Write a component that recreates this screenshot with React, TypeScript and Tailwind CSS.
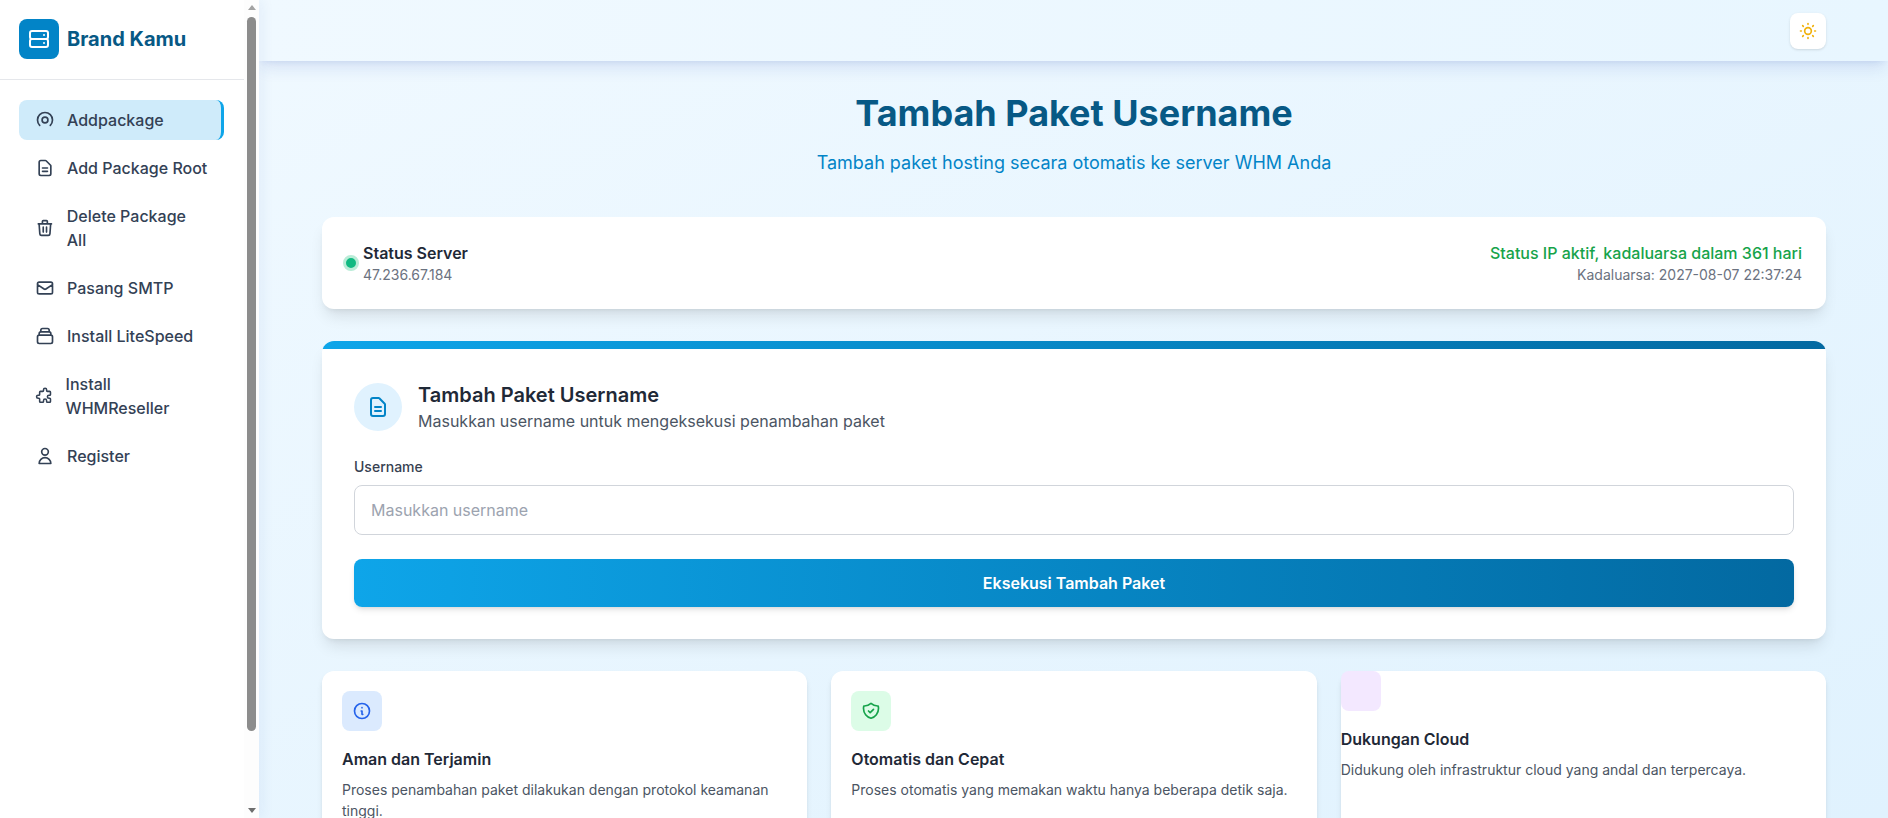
import React from "react";

const s = { fill: "none", stroke: "currentColor", strokeWidth: 2, strokeLinecap: "round" as const, strokeLinejoin: "round" as const };

function Ico({ d, className, children }: { d?: string; className?: string; children?: React.ReactNode }) {
  return (
    <svg viewBox="0 0 24 24" {...s} className={className ?? "w-5 h-5 mr-3"}>
      {d ? <path d={d} /> : null}
      {children}
    </svg>
  );
}

const docPath = "M9 12h6m-6 4h6m2 5H7a2 2 0 01-2-2V5a2 2 0 012-2h5.586a1 1 0 01.707.293l5.414 5.414a1 1 0 01.293.707V19a2 2 0 01-2 2z";

const nav: { label: string; d?: string; custom?: React.ReactNode; active?: boolean }[] = [
  {
    label: "Addpackage",
    active: true,
    custom: (
      <>
        <path d="M5.64 18.36A9 9 0 1 1 18.36 18.36" />
        <circle cx="12" cy="12" r="3.5" />
      </>
    ),
  },
  { label: "Add Package Root", d: docPath },
  {
    label: "Delete Package All",
    d: "M19 7l-.867 12.142A2 2 0 0116.138 21H7.862a2 2 0 01-1.995-1.858L5 7m5 4v6m4-6v6m1-10V4a1 1 0 00-1-1h-4a1 1 0 00-1 1v3M4 7h16",
  },
  {
    label: "Pasang SMTP",
    d: "M3 8l7.89 5.26a2 2 0 002.22 0L21 8M5 19h14a2 2 0 002-2V7a2 2 0 00-2-2H5a2 2 0 00-2 2v10a2 2 0 002 2z",
  },
  {
    label: "Install LiteSpeed",
    d: "M19 11H5m14 0a2 2 0 012 2v6a2 2 0 01-2 2H5a2 2 0 01-2-2v-6a2 2 0 012-2m14 0V9a2 2 0 00-2-2M5 11V9a2 2 0 012-2m0 0V5a2 2 0 012-2h6a2 2 0 012 2v2M7 7h10",
  },
  {
    label: "Install WHMReseller",
    d: "M11 4a2 2 0 114 0v1a1 1 0 001 1h3a1 1 0 011 1v3a1 1 0 01-1 1h-1a2 2 0 100 4h1a1 1 0 011 1v3a1 1 0 01-1 1h-3a1 1 0 01-1-1v-1a2 2 0 10-4 0v1a1 1 0 01-1 1H7a1 1 0 01-1-1v-3a1 1 0 00-1-1H4a2 2 0 110-4h1a1 1 0 001-1V7a1 1 0 011-1h3a1 1 0 001-1V4z",
  },
  {
    label: "Register",
    d: "M16 7a4 4 0 11-8 0 4 4 0 018 0zM12 14a7 7 0 00-7 7h14a7 7 0 00-7-7z",
  },
];

const features = [
  {
    title: "Aman dan Terjamin",
    desc: "Proses penambahan paket dilakukan dengan protokol keamanan tinggi.",
    box: "bg-[#dbeafe] text-[#2563eb]",
    d: "M13 16h-1v-4h-1m1-4h.01M21 12a9 9 0 11-18 0 9 9 0 0118 0z",
  },
  {
    title: "Otomatis dan Cepat",
    desc: "Proses otomatis yang memakan waktu hanya beberapa detik saja.",
    box: "bg-[#dcfce7] text-[#16a34a]",
    d: "M9 12l2 2 4-4m5.618-4.016A11.955 11.955 0 0112 2.944a11.955 11.955 0 01-8.618 3.04A12.02 12.02 0 003 9c0 5.591 3.824 10.29 9 11.622 5.176-1.332 9-6.03 9-11.622 0-1.042-.133-2.052-.382-3.016z",
  },
];

export default function App() {
  return (
    <div className="flex h-[818px] w-[1888px] overflow-hidden bg-[#e6f4fe] font-['Inter',sans-serif]">
      <aside className="relative z-10 flex h-full w-[259px] shrink-0 bg-white shadow-[4px_0_12px_rgba(30,64,175,0.06)]">
        <div className="h-full w-[244px] shrink-0">
          <div className="flex h-[80px] items-center border-b border-[#e5e7eb] pb-[1px] pl-[19px]">
            <div className="mr-2 flex h-10 w-10 items-center justify-center rounded-lg bg-[#0284c7] text-white">
              <Ico className="h-6 w-6" d="M5 12h14M5 12a2 2 0 01-2-2V6a2 2 0 012-2h14a2 2 0 012 2v4a2 2 0 01-2 2M5 12a2 2 0 00-2 2v4a2 2 0 002 2h14a2 2 0 002-2v-4a2 2 0 00-2-2m-2-4h.01M17 16h.01" />
            </div>
            <span className="text-xl font-bold text-[#075985]">Brand Kamu</span>
          </div>
          <nav className="ml-[19px] mt-5 flex w-[205px] flex-col gap-2">
            {nav.map((n) => (
              <div
                key={n.label}
                className={
                  n.active
                    ? "flex items-center rounded-lg border-r-[3px] border-[#0ea5e9] bg-[#cfebfa] px-4 py-2 text-[#334155]"
                    : "flex items-center rounded-lg px-4 py-2 text-[#334155]"
                }
              >
                <Ico d={n.d}>{n.custom}</Ico>
                <span className="text-base font-medium leading-6">{n.label}</span>
              </div>
            ))}
          </nav>
        </div>
        <div className="flex h-full w-[15px] shrink-0 flex-col items-center bg-[#fdfdfd]">
          <div className="mt-[5px] h-0 w-0 border-x-[4px] border-b-[5px] border-x-transparent border-b-[#a3a3a3]" />
          <div className="mt-[7px] h-[714px] w-[9px] rounded-full bg-[#8c8c8c]" />
          <div className="flex-1" />
          <div className="mb-[5px] h-0 w-0 border-x-[4px] border-t-[5px] border-x-transparent border-t-[#6e6e6e]" />
        </div>
      </aside>
      <main className="relative flex h-full min-w-0 flex-1 flex-col overflow-hidden bg-gradient-to-br from-[#f0f9ff] to-[#e0f2fe]">
        <header className="flex h-[61px] shrink-0 items-center justify-end bg-gradient-to-r from-[#f0f9ff] to-[#e8f6ff] pr-[62px] shadow-[0_10px_15px_-3px_rgba(30,64,175,0.12),0_4px_6px_-4px_rgba(30,64,175,0.12)]">
          <div className="flex h-9 w-9 items-center justify-center rounded-lg bg-white text-[#f0b10c] shadow-sm">
            <Ico className="h-5 w-5" d="M12 3v1m0 16v1m9-9h-1M4 12H3m15.364 6.364l-.707-.707M6.343 6.343l-.707-.707m12.728 0l-.707.707M6.343 17.657l-.707.707M16 12a4 4 0 11-8 0 4 4 0 018 0z" />
          </div>
        </header>
        <div className="flex flex-col pl-[63px] pr-[62px]">
          <div className="mt-[32px] flex flex-col items-center">
            <h1 className="text-4xl leading-10 font-bold text-[#075985]">Tambah Paket Username</h1>
            <p className="mt-4 text-lg leading-7 text-[#0284c7]">Tambah paket hosting secara otomatis ke server WHM Anda</p>
          </div>
          <section className="mt-[40px] flex h-[92px] items-center justify-between rounded-xl bg-white px-6 shadow-[0_10px_15px_-3px_rgba(0,0,0,0.1),0_4px_6px_-4px_rgba(0,0,0,0.1)]">
            <div className="flex items-center">
              <div className="ml-[-3px] mr-[4px] h-4 w-4 rounded-full border-[3px] border-[#b9ecd7] bg-[#10b981]" />
              <div>
                <div className="text-base leading-6 font-semibold text-[#1f2937]">Status Server</div>
                <div className="text-sm leading-5 text-[#6b7280]">47.236.67.184</div>
              </div>
            </div>
            <div className="text-right">
              <div className="text-base leading-6 font-medium text-[#16a34a]">Status IP aktif, kadaluarsa dalam 361 hari</div>
              <div className="text-sm leading-5 text-[#6b7280]">Kadaluarsa: 2027-08-07 22:37:24</div>
            </div>
          </section>
          <section className="mt-8 overflow-hidden rounded-xl bg-white shadow-[0_10px_15px_-3px_rgba(0,0,0,0.1),0_4px_6px_-4px_rgba(0,0,0,0.1)]">
            <div className="h-2 bg-gradient-to-r from-[#0ea5e9] to-[#0369a1]" />
            <div className="p-8">
              <div className="flex items-center">
                <div className="mr-4 flex h-12 w-12 items-center justify-center rounded-full bg-[#e0f2fe] text-[#0284c7]">
                  <Ico className="h-6 w-6" d={docPath} />
                </div>
                <div>
                  <div className="text-xl leading-7 font-semibold text-[#1f2937]">Tambah Paket Username</div>
                  <div className="text-base leading-6 text-[#4b5563]">Masukkan username untuk mengeksekusi penambahan paket</div>
                </div>
              </div>
              <div className="mt-6 text-sm leading-5 font-medium text-[#374151]">Username</div>
              <div className="mt-2 flex h-[50px] items-center rounded-lg border border-[#d1d5db] bg-white px-4 text-base text-[#9ca3af]">Masukkan username</div>
              <div className="mt-6 flex h-12 items-center justify-center rounded-lg bg-gradient-to-r from-[#0ea5e9] to-[#0369a1] text-base font-semibold text-white shadow-md">Eksekusi Tambah Paket</div>
            </div>
          </section>
          <div className="mt-8 grid grid-cols-3 gap-6">
            {features.map((f) => (
              <div key={f.title} className="h-[200px] rounded-xl bg-white p-5 shadow-md">
                <div className={"flex h-10 w-10 items-center justify-center rounded-lg " + f.box}>
                  <Ico className="h-5 w-5" d={f.d} />
                </div>
                <div className="mt-4 text-base leading-6 font-semibold text-[#1f2937]">{f.title}</div>
                <div className="mt-2 text-sm leading-[21px] text-[#4b5563]">{f.desc}</div>
              </div>
            ))}
            <div className="h-[200px] rounded-xl bg-white shadow-md">
              <div className="h-10 w-10 rounded-lg bg-[#f3e8ff]" />
              <div className="mt-4 text-base leading-6 font-semibold text-[#1f2937]">Dukungan Cloud</div>
              <div className="mt-2 text-sm leading-[21px] text-[#4b5563]">Didukung oleh infrastruktur cloud yang andal dan terpercaya.</div>
            </div>
          </div>
        </div>
      </main>
    </div>
  );
}
